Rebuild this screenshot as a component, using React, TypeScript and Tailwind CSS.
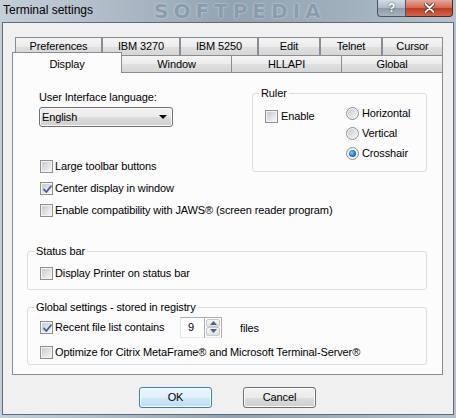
import React from "react";

function CheckBox({ checked }: { checked?: boolean }) {
  return (
    <span className="relative flex h-[13px] w-[13px] shrink-0 items-center justify-center border border-[#8e8f8f] bg-[#f4f4f4]">
      <span className="h-[9px] w-[9px] bg-[linear-gradient(135deg,#c6cbd2,#f4f5f6)]" />
      {checked && (
        <svg className="absolute left-[1px] top-[1px]" width="11" height="11" viewBox="0 0 11 11">
          <path d="M2 5.5 L4.3 8 L9 2.2" fill="none" stroke="#3f5d95" strokeWidth="1.8" strokeLinecap="round" strokeLinejoin="round" />
        </svg>
      )}
    </span>
  );
}

function Radio({ selected }: { selected?: boolean }) {
  return (
    <span className="flex h-[13px] w-[13px] shrink-0 items-center justify-center rounded-full border border-[#8e8f8f] bg-[#f4f4f4]">
      {selected ? (
        <span className="h-[7px] w-[7px] rounded-full bg-[radial-gradient(circle_at_40%_40%,#8fd0fa_0%,#2a83d4_45%,#0e3f7f_100%)]" />
      ) : (
        <span className="h-[9px] w-[9px] rounded-full bg-[linear-gradient(135deg,#c6cbd2,#f4f5f6)]" />
      )}
    </span>
  );
}

function CheckRow({ label, checked }: { label: string; checked?: boolean }) {
  return (
    <div className="flex h-[22px] items-center gap-[2px] whitespace-nowrap">
      <CheckBox checked={checked} />
      <span className="leading-[13px]">{label}</span>
    </div>
  );
}

const tabBg =
  "bg-[linear-gradient(#f4f4f4_0%,#ececec_50%,#e0e0e0_51%,#d6d6d6_100%)]";

export default function App() {
  return (
    <div className="relative flex h-[418px] w-[456px] flex-col overflow-hidden bg-[linear-gradient(90deg,#c4cfd8_0%,#aebbc6_25%,#91a3b2_50%,#9fafbc_75%,#b5c2cc_100%)] font-['Liberation_Sans',Arial,sans-serif] text-[11px] tracking-[-0.12px] text-black">
      {/* title bar */}
      <div className="relative flex h-[22px] shrink-0 items-start">
        <span className="pl-[3px] pt-[3px] text-[12px] leading-[15px] tracking-normal text-black">Terminal settings</span>
        <span className="pointer-events-none absolute left-[154px] top-0 font-['DejaVu_Sans',sans-serif] text-[20px] font-bold leading-[22px] tracking-[5px] text-[#8a9cac] [text-shadow:0_0_2px_#dfe6ec]">
          SOFTPEDIA
        </span>
        <div className="ml-auto mr-[3px] flex">
          <div className="flex h-[17px] w-[29px] items-center justify-center rounded-bl-[4px] border border-t-0 border-[#4a5561] bg-[linear-gradient(#d4dce3_0%,#aebbc6_50%,#8c9ba8_51%,#a6b4c0_100%)] text-[12px] font-bold leading-none text-white [text-shadow:0_0_2px_#333]">
            ?
          </div>
          <div className="flex h-[17px] w-[47px] items-center justify-center rounded-br-[4px] border border-l-0 border-t-0 border-[#4a2a24] bg-[linear-gradient(#e7a899_0%,#d0674f_50%,#c0391f_51%,#d2654a_100%)]">
            <svg width="11" height="10" viewBox="0 0 11 10">
              <path d="M1.5 1 L9.5 9 M9.5 1 L1.5 9" stroke="#3b1a14" strokeWidth="3.4" strokeLinecap="round" />
              <path d="M1.5 1 L9.5 9 M9.5 1 L1.5 9" stroke="#ffffff" strokeWidth="2" strokeLinecap="round" />
            </svg>
          </div>
        </div>
      </div>

      {/* client area */}
      <div className="mx-[2px] mb-[3px] flex flex-1 flex-col border border-[#5f6b76] bg-[#f0f0f0]">
        <div className="flex flex-col pl-[9px] pt-[14px]">
          {/* tab row 1 */}
          <div className="ml-[3px] flex h-[18px]">
            <div className={`flex w-[87px] items-center justify-center border border-b-0 border-[#898c95] ${tabBg}`}>Preferences</div>
            <div className={`flex w-[78px] items-center justify-center border border-b-0 border-[#898c95] ${tabBg}`}>IBM 3270</div>
            <div className={`flex w-[78px] items-center justify-center border border-b-0 border-[#898c95] ${tabBg}`}>IBM 5250</div>
            <div className={`flex w-[62px] items-center justify-center border border-b-0 border-[#898c95] ${tabBg}`}>Edit</div>
            <div className={`flex w-[62px] items-center justify-center border border-b-0 border-[#898c95] ${tabBg}`}>Telnet</div>
            <div className={`flex w-[61px] items-center justify-center border border-b-0 border-[#898c95] ${tabBg}`}>Cursor</div>
          </div>
          {/* tab row 2 */}
          <div className="-mt-[3px] flex h-[21px] items-start">
            <div className="relative z-10 flex h-[21px] w-[110px] items-start justify-center border border-b-0 border-[#898c95] bg-[#fcfcfc] pt-[3px]">
              Display
            </div>
            <div className={`mt-[3px] flex h-[17px] w-[110px] items-center justify-center border border-b-0 border-l-0 border-[#898c95] ${tabBg}`}>Window</div>
            <div className={`mt-[3px] flex h-[17px] w-[110px] items-center justify-center border border-b-0 border-l-0 border-[#898c95] ${tabBg}`}>HLLAPI</div>
            <div className={`mt-[3px] flex h-[17px] w-[101px] items-center justify-center border border-b-0 border-l-0 border-[#898c95] ${tabBg}`}>Global</div>
          </div>

          {/* panel */}
          <div className="-mt-px flex h-[303px] w-[431px] flex-col border border-[#898c95] bg-[#fcfcfc] pl-[14px] pr-[15px] pt-[14px]">
            <div className="flex items-start justify-between">
              <div className="mt-[4px] flex w-[225px] flex-col">
                <span className="ml-[12px] leading-[13px]">User Interface language:</span>
                <div className="ml-[12px] mt-[3px] flex h-[20px] w-[134px] items-center justify-between rounded-[3px] border border-[#707070] bg-[linear-gradient(#f2f2f2_0%,#ebebeb_50%,#dddddd_51%,#cfcfcf_100%)] pl-[2px] pr-[5px] shadow-[inset_0_0_0_1px_#fafafa]">
                  <span className="leading-[13px]">English</span>
                  <svg width="8" height="4" viewBox="0 0 8 4">
                    <path d="M0 0 L8 0 L4 4 Z" fill="#000" />
                  </svg>
                </div>
                <div className="ml-[13px] mt-[28px] flex flex-col">
                  <CheckRow label="Large toolbar buttons" />
                  <CheckRow label="Center display in window" checked />
                  <CheckRow label="Enable compatibility with JAWS® (screen reader program)" />
                </div>
              </div>

              <fieldset className="w-[175px] rounded-[3px] border border-[#d5dfe5] pb-[8px]">
                <legend className="ml-[6px] px-[2px] leading-[13px]">Ruler</legend>
                <div className="mt-[3px] flex">
                  <div className="mt-[3px] flex h-[20px] w-[93px] items-center gap-[3px] pl-[12px]">
                    <CheckBox />
                    <span className="leading-[13px]">Enable</span>
                  </div>
                  <div className="flex flex-col">
                    <div className="flex h-[20px] items-center gap-[3px]">
                      <Radio />
                      <span className="leading-[13px]">Horizontal</span>
                    </div>
                    <div className="flex h-[20px] items-center gap-[3px]">
                      <Radio />
                      <span className="leading-[13px]">Vertical</span>
                    </div>
                    <div className="flex h-[20px] items-center gap-[3px]">
                      <Radio selected />
                      <span className="leading-[13px]">Crosshair</span>
                    </div>
                  </div>
                </div>
              </fieldset>
            </div>

            <fieldset className="mt-[24px] rounded-[3px] border border-[#d5dfe5] pb-[5px]">
              <legend className="ml-[6px] px-[2px] leading-[13px]">Status bar</legend>
              <div className="ml-[12px] mt-[4px]">
                <CheckRow label="Display Printer on status bar" />
              </div>
            </fieldset>

            <fieldset className="mt-[11px] rounded-[3px] border border-[#d5dfe5] pb-[1px]">
              <legend className="ml-[6px] px-[2px] leading-[13px]">Global settings - stored in registry</legend>
              <div className="ml-[12px] mt-[2px] flex h-[22px] items-center">
                <div className="w-[140px]">
                  <CheckRow label="Recent file list contains" checked />
                </div>
                <div className="flex h-[21px]">
                  <div className="flex w-[24px] items-center border border-r-0 border-[#abadb3] border-b-[#e3e9ef] border-l-[#e2e3ea] bg-white pl-[7px] leading-[13px]">
                    9
                  </div>
                  <div className="flex w-[18px] flex-col border border-[#abadb3] border-b-[#e3e9ef] bg-white p-[1px]">
                    <div className="flex flex-1 items-center justify-center rounded-[2px] border border-[#c7c9cd] bg-[linear-gradient(#f6f6f6,#e2e2e2)]">
                      <svg width="7" height="4" viewBox="0 0 7 4">
                        <path d="M0 4 L7 4 L3.5 0 Z" fill="#4d6185" />
                      </svg>
                    </div>
                    <div className="flex flex-1 items-center justify-center rounded-[2px] border border-[#c7c9cd] bg-[linear-gradient(#f6f6f6,#e2e2e2)]">
                      <svg width="7" height="4" viewBox="0 0 7 4">
                        <path d="M0 0 L7 0 L3.5 4 Z" fill="#4d6185" />
                      </svg>
                    </div>
                  </div>
                </div>
                <span className="ml-[18px] pt-[2px] leading-[13px]">files</span>
              </div>
              <div className="ml-[12px] mt-[3px]">
                <CheckRow label="Optimize for Citrix MetaFrame® and Microsoft Terminal-Server®" />
              </div>
            </fieldset>
          </div>
        </div>

        {/* buttons */}
        <div className="mt-[12px] flex justify-center gap-[31px] pr-[1px]">
          <div className="flex h-[21px] w-[73px] items-center justify-center rounded-[3px] border border-[#3c7fb1] bg-[linear-gradient(#eaf5fc_0%,#e0f0fa_50%,#cfe7f6_51%,#bfdff2_100%)] shadow-[inset_0_0_0_1px_#f4fbff]">
            OK
          </div>
          <div className="flex h-[21px] w-[73px] items-center justify-center rounded-[3px] border border-[#707070] bg-[linear-gradient(#f2f2f2_0%,#ebebeb_50%,#dddddd_51%,#cfcfcf_100%)] shadow-[inset_0_0_0_1px_#fafafa]">
            Cancel
          </div>
        </div>
      </div>
    </div>
  );
}
